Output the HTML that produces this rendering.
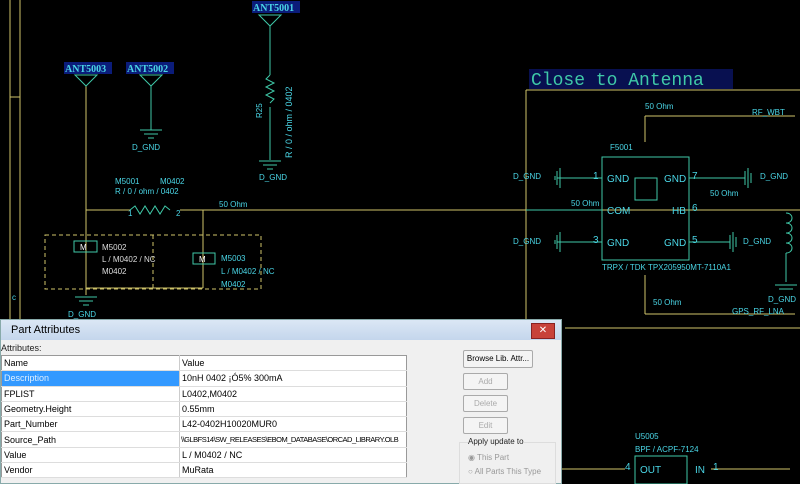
<!DOCTYPE html>
<html><head><meta charset="utf-8"><style>
body{margin:0;width:800px;height:484px;overflow:hidden;background:#000;position:relative;font-family:"Liberation Sans",sans-serif}
svg{position:absolute;left:0;top:0}
.dlg{position:absolute;left:0;top:319px;width:562px;height:165px;background:#f0f0f0;border:1px solid #8aa;box-sizing:border-box}
.tb{height:20px;background:linear-gradient(#dbe7f5,#c4d6ec);font-size:11px;line-height:20px;padding-left:10px;color:#000}
.x{position:absolute;right:6px;top:3px;width:22px;height:14px;background:#c8423a;border:1px solid #822;color:#fff;font-size:10px;text-align:center;line-height:14px}
.lab{position:absolute;left:0;top:23px;font-size:9px;color:#222}
table{position:absolute;left:0;top:35px;width:406px;table-layout:fixed;border-collapse:collapse;font-size:9px;background:#fff;border:1px solid #999}
td{height:14.3px;padding:0 2px;border-bottom:1px solid #ddd;white-space:nowrap;overflow:hidden}
td:first-child{border-right:1px solid #ccc}
.sel{background:#3399ff;color:#dfefff}
.btn{position:absolute;font-size:8px;text-align:center;border:1px solid #aaa;border-radius:2px;background:#f4f4f4;color:#aaa}
</style></head><body>
<svg width="800" height="484" font-family="Liberation Sans,sans-serif">
<g stroke="#cfc46a" stroke-width="1" fill="none">
<line x1="10" y1="0" x2="10" y2="319"/><line x1="20" y1="0" x2="20" y2="319"/><line x1="10" y1="97" x2="20" y2="97"/>
<line x1="86" y1="86" x2="86" y2="295"/><line x1="86" y1="210" x2="130" y2="210"/><line x1="180" y1="210" x2="800" y2="210"/>
<line x1="203" y1="210" x2="203" y2="288"/>
<line x1="526" y1="90" x2="526" y2="319"/><line x1="526" y1="90" x2="800" y2="90"/>
<line x1="645" y1="116" x2="645" y2="142"/><line x1="645" y1="116" x2="795" y2="116"/>
<line x1="645" y1="275" x2="645" y2="314"/><line x1="645" y1="314" x2="795" y2="314"/>
<line x1="689" y1="210" x2="800" y2="210"/>
<line x1="565" y1="328" x2="800" y2="328"/>
<line x1="562" y1="469" x2="625" y2="469"/><line x1="711" y1="469" x2="790" y2="469"/>
<path stroke-dasharray="4,3" d="M45 235H261V289H45Z M153 235V289"/>
<line x1="86" y1="288" x2="203" y2="288"/>
</g>
<g stroke="#3fc9a8" stroke-width="1" fill="none">
<path d="M75 75H97L86 86Z M140 75H162L151 86Z M151 86V130 M259 15H281L270 26Z"/>
<line x1="270" y1="26" x2="270" y2="75"/><path d="M270 75l-4 4 8 4-8 4 8 4-8 4 8 4-4 4"/><line x1="270" y1="107" x2="270" y2="160"/>
<path d="M140 130h22M144 134h14M148 138h6 M259 161h22M263 165h14M267 169h6 M75 297h22M79 301h14M83 305h6"/>
<path d="M130 210l5-4 5 8 5-8 5 8 5-8 5 8 5-8 5 4"/>
<rect x="74" y="241" width="23" height="11"/><rect x="193" y="253" width="22" height="11"/>
<rect x="602" y="157" width="87" height="103"/><rect x="635" y="178" width="22" height="22"/>
<path d="M557 178H602 M557 242H602 M689 178H745 M689 242H730 M526 210H602"/>
<path d="M557 171v14M560 168v20M555 176v4 M557 235v14M560 232v20M555 240v4 M745 171v14M748 168v20M751 173v10 M730 235v14M733 232v20M736 237v10"/>
<path d="M786 213c8 0 8 10 0 10c8 0 8 10 0 10c8 0 8 10 0 10c8 0 8 10 0 10 M786 253V282 M775 285h22M779 289h14"/>
<rect x="635" y="456" width="52" height="28"/>
</g>
<g font-size="9" fill="#4ad6e6">
<g fill="#0b1c7a"><rect x="64" y="62" width="48" height="12"/><rect x="126" y="62" width="48" height="12"/><rect x="252" y="1" width="48" height="12"/><rect x="529" y="69" width="204" height="20" fill="#081050"/></g>
<text x="65" y="72" font-weight="bold" font-size="10" font-family="Liberation Serif,serif">ANT5003</text>
<text x="127" y="72" font-weight="bold" font-size="10" font-family="Liberation Serif,serif">ANT5002</text>
<text x="253" y="11" font-weight="bold" font-size="10" font-family="Liberation Serif,serif">ANT5001</text>
<text x="531" y="85" font-size="18" font-family="Liberation Mono,monospace" fill="#3fc9a8">Close to Antenna</text>
<g font-size="8">
<text x="132" y="150">D_GND</text><text x="259" y="180">D_GND</text><text x="68" y="317">D_GND</text>
<text x="115" y="184">M5001</text><text x="160" y="184">M0402</text><text x="115" y="194">R / 0 / ohm / 0402</text>
<text x="219" y="207">50 Ohm</text><text x="128" y="216">1</text><text x="176" y="216">2</text>
<text x="102" y="250" fill="#ddd">M5002</text><text x="102" y="262" fill="#ddd">L / M0402 / NC</text><text x="102" y="274" fill="#ddd">M0402</text>
<text x="80" y="250" fill="#fff">M</text><text x="199" y="262" fill="#fff">M</text>
<text x="221" y="261">M5003</text><text x="221" y="274">L / M0402 / NC</text><text x="221" y="287">M0402</text>
<text x="12" y="300">c</text>
<text transform="translate(262 118) rotate(-90)">R25</text>
<text transform="translate(292 158) rotate(-90)" font-size="9">R / 0 / ohm / 0402</text>
<text x="645" y="109">50 Ohm</text><text x="752" y="115">RF_WBT</text><text x="610" y="150">F5001</text>
<text x="513" y="179">D_GND</text><text x="513" y="244">D_GND</text><text x="571" y="206">50 Ohm</text>
<text x="710" y="196">50 Ohm</text><text x="760" y="179">D_GND</text><text x="743" y="244">D_GND</text>
<text x="602" y="270">TRPX / TDK TPX205950MT-7110A1</text>
<text x="653" y="305">50 Ohm</text><text x="732" y="314">GPS_RF_LNA</text><text x="768" y="302">D_GND</text>
<text x="635" y="439">U5005</text><text x="635" y="452">BPF / ACPF-7124</text>
</g>
<g font-size="10"><text x="607" y="182">GND</text><text x="664" y="182">GND</text><text x="607" y="214">COM</text><text x="672" y="214">HB</text><text x="607" y="246">GND</text><text x="664" y="246">GND</text>
<text x="593" y="179">1</text><text x="593" y="243">3</text><text x="692" y="179">7</text><text x="692" y="211">6</text><text x="692" y="243">5</text>
<text x="640" y="473">OUT</text><text x="695" y="473">IN</text><text x="625" y="470">4</text><text x="713" y="470">1</text></g>
</g>
</svg>
<div class="dlg">
<div class="tb">Part Attributes</div><div class="x">✕</div>
<div class="lab">Attributes:</div>
<table>
<colgroup><col style="width:178px"><col></colgroup>
<tr><td>Name</td><td>Value</td></tr>
<tr><td class="sel">Description</td><td>10nH 0402 ¡Ó5% 300mA</td></tr>
<tr><td>FPLIST</td><td>L0402,M0402</td></tr>
<tr><td>Geometry.Height</td><td>0.55mm</td></tr>
<tr><td>Part_Number</td><td>L42-0402H10020MUR0</td></tr>
<tr><td>Source_Path</td><td style="font-size:7.5px;letter-spacing:-0.5px;padding:0 1px">\\GLBFS14\SW_RELEASES\EBOM_DATABASE\ORCAD_LIBRARY.OLB</td></tr>
<tr><td>Value</td><td>L / M0402 / NC</td></tr>
<tr><td>Vendor</td><td>MuRata</td></tr>
</table>
<div class="btn" style="left:462px;top:30px;width:68px;height:16px;line-height:16px;color:#000">Browse Lib. Attr...</div>
<div class="btn" style="left:462px;top:53px;width:43px;height:15px;line-height:15px">Add</div>
<div class="btn" style="left:462px;top:75px;width:43px;height:15px;line-height:15px">Delete</div>
<div class="btn" style="left:462px;top:97px;width:43px;height:15px;line-height:15px">Edit</div>
<div style="position:absolute;left:458px;top:122px;width:95px;height:40px;border:1px solid #ddd;font-size:8px;color:#222">
<div style="position:absolute;top:-6px;left:8px;background:#f0f0f0">Apply update to</div>
<div style="position:absolute;top:10px;left:8px;color:#999">◉ This Part</div>
<div style="position:absolute;top:24px;left:8px;color:#999">○ All Parts This Type</div></div>
</div>
</body></html>
